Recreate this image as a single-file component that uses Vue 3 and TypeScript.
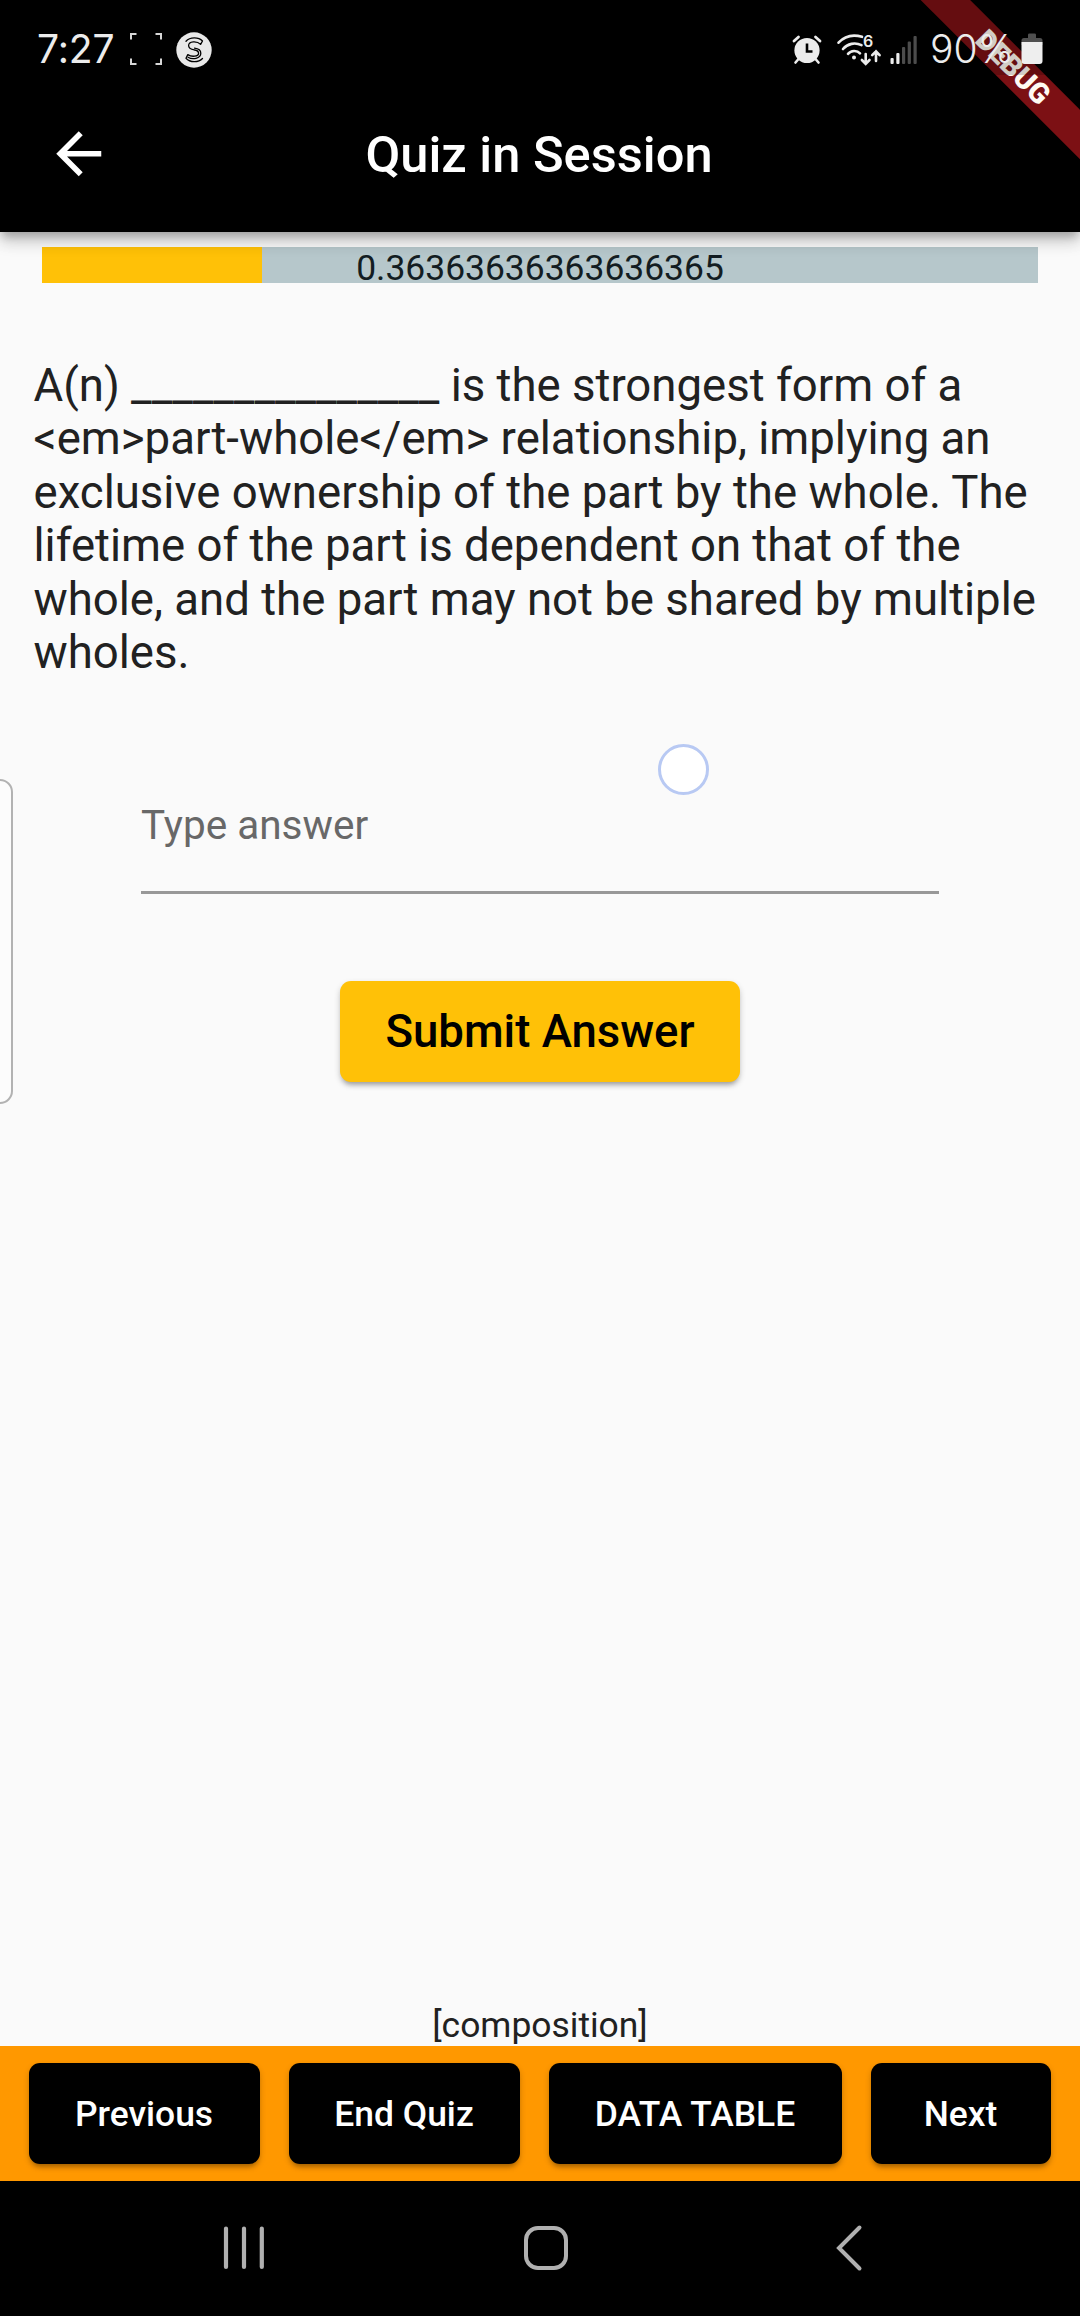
<script setup lang="ts">
interface QuizAction {
  label: string
  width: number
}

const progressLabel = '0.36363636363636365'
const progressPercent = 22.05
const question =
  'A(n) _______________ is the strongest form of a <em>part-whole</em> relationship, implying an exclusive ownership of the part by the whole. The lifetime of the part is dependent on that of the whole, and the part may not be shared by multiple wholes.'
const answerHint = '[composition]'

const actions: QuizAction[] = [
  { label: 'Previous', width: 231 },
  { label: 'End Quiz', width: 231 },
  { label: 'DATA TABLE', width: 293 },
  { label: 'Next', width: 180 },
]
</script>

<template>
  <div class="screen">
    <header class="top">
      <div class="status">
        <span class="clock">7:27</span>
        <svg class="capture" width="32" height="32" viewBox="0 0 32 32" fill="none" stroke="#d6d6d6" stroke-width="2">
          <path d="M1 6.5V1h5.5M25.500 1H31v5.500M31 25.500V31h-5.500M6.500 31H1v-5.500" />
        </svg>
        <svg class="badge" width="36" height="36" viewBox="0 0 36 36">
          <circle cx="18" cy="18" r="17.700" fill="#e8e8e8" />
          <g fill="none" stroke="#000" stroke-width="1.300" stroke-linecap="round" stroke-linejoin="round">
            <path d="M10 9.300C14 4.800 22.500 4.800 26.500 9L24.600 12.400C21 8.600 12.600 9 12.600 13.600C12.600 17.200 16 17.600 18.500 18C21 18.400 22.600 19.200 22.600 21.200C22.600 24.600 15.600 25.200 11.800 22.600L10 26.300C14 30.800 22.500 30.800 26.500 26.500" />
            <path d="M12 25.200C16.500 28 24.800 26.600 24.800 21.200C24.800 17.800 21.500 16.600 18.500 16.200" />
          </g>
        </svg>
        <span class="spacer"></span>
        <svg class="alarm" width="30" height="30" viewBox="0 0 30 30">
          <g stroke="#ececec" stroke-linecap="round" fill="none">
            <path d="M2 6L6.500 2M28 6L23.500 2" stroke-width="2.800" />
            <path d="M6.500 24L3.500 27.500M23.500 24L26.500 27.500" stroke-width="2.600" />
          </g>
          <circle cx="15" cy="15.500" r="12.600" fill="#ececec" />
          <path d="M15 8.500V16.500H20.500" fill="none" stroke="#000" stroke-width="2.600" />
        </svg>
        <svg class="wifi" width="44" height="38" viewBox="0 -4 44 38">
          <g fill="none" stroke="#ececec" stroke-linecap="round" stroke-width="2.600">
            <path d="M1.500 9.700C7.500 3.200 16 1.200 25 3.800" />
            <path d="M6 16C10.500 10.600 18 9 24.500 12.200" />
            <path d="M11 20.800C14 17.200 20 17 23 20.300" />
            <path d="M28.700 21V30.500M24.900 27L28.700 30.800L32.500 27M39 28V18.500M35.200 22.200L39 18.400L42.600 22.200" />
          </g>
          <circle cx="17" cy="24.400" r="2" fill="#ececec" />
          <text x="26" y="13.500" class="wifi-gen">6</text>
        </svg>
        <svg class="signal" width="28" height="30" viewBox="0 0 28 30">
          <g fill="#ececec">
            <rect x="0.500" y="23" width="3.200" height="6" rx="1" />
            <rect x="6.300" y="18" width="3.200" height="11" rx="1" />
          </g>
          <g fill="#4c4c4c">
            <rect x="12" y="12" width="3.200" height="17" rx="1" />
            <rect x="17.700" y="6.500" width="3.200" height="22.500" rx="1" />
            <rect x="23.500" y="1" width="3.200" height="28" rx="1" />
          </g>
        </svg>
        <span class="percent">90%</span>
        <svg class="battery" width="22" height="32" viewBox="0 0 22 32">
          <path d="M7 1.800Q7 0.500 8.500 0.500H13.500Q15 0.500 15 1.800V5H19Q21.500 5 21.500 7.500V12H0.500V7.500Q0.500 5 3 5H7Z" fill="#4f4f4f" />
          <path d="M0.500 9H21.500V28Q21.500 31 18.500 31H3.500Q0.500 31 0.500 28Z" fill="#eeeeee" />
        </svg>
      </div>
      <div class="app-bar">
        <svg class="back" width="67.500" height="67.500" viewBox="0 0 24 24" fill="#fff">
          <path d="M20 11H7.830l5.590-5.590L12 4l-8 8 8 8 1.410-1.410L7.830 13H20v-2z" />
        </svg>
        <h1 class="title">Quiz in Session</h1>
      </div>
      <div class="ribbon-clip">
        <div class="ribbon">DEBUG</div>
        <div class="scrim"></div>
      </div>
    </header>

    <main class="content">
      <div class="progress">
        <div class="progress-fill" :style="{ width: progressPercent + '%' }"></div>
        <span class="progress-label">{{ progressLabel }}</span>
      </div>
      <p class="question">{{ question }}</p>
      <div class="field">Type answer</div>
      <button class="submit" type="button">Submit Answer</button>
      <p class="hint">{{ answerHint }}</p>
      <div class="edge-panel"></div>
      <div class="touch"></div>
    </main>

    <footer class="actions">
      <button
        v-for="action in actions"
        :key="action.label"
        class="action"
        type="button"
        :style="{ width: action.width + 'px' }"
      >
        {{ action.label }}
      </button>
    </footer>

    <nav class="system-nav">
      <svg width="42" height="46" viewBox="0 0 42 46" fill="none" stroke="#b0b0b0" stroke-width="4.200" stroke-linecap="round">
        <path d="M3 3.500V42M21 3.500V42M38.800 3.500V42" />
      </svg>
      <svg class="home" width="46" height="46" viewBox="0 0 46 46" fill="none" stroke="#b0b0b0" stroke-width="4">
        <rect x="3" y="3" width="40" height="40" rx="12" />
      </svg>
      <svg class="nav-back" width="28" height="48" viewBox="0 0 28 48" fill="none" stroke="#b0b0b0" stroke-width="4" stroke-linecap="round">
        <path d="M24.500 3.500L4 24L24.500 44.500" />
      </svg>
    </nav>
  </div>
</template>

<style>
body {
  background: #fafafa;
}
</style>

<style scoped>
.screen {
  display: flex;
  flex-direction: column;
  width: 1080px;
  height: 2316px;
  overflow: hidden;
  background: #fafafa;
  color: #212121;
  font-family: Roboto, 'Liberation Sans', sans-serif;
}

.top {
  position: relative;
  z-index: 1;
  flex: none;
  height: 232px;
  background: #000;
  box-shadow: 0 6px 8px -2px rgba(0, 0, 0, 0.2), 0 11px 14px rgba(0, 0, 0, 0.14), 0 3px 20px rgba(0, 0, 0, 0.1);
}

.status {
  position: relative;
  z-index: 2;
  display: flex;
  align-items: flex-start;
  height: 98px;
  padding: 0 37px;
  box-sizing: border-box;
  color: #ececec;
  font-family: Inter, Roboto, sans-serif;
  font-size: 39px;
  line-height: 97px;
}

.status svg {
  flex: none;
}

.clock {
  width: 93px;
  letter-spacing: -0.1px;
}

.capture {
  margin-top: 33px;
}

.badge {
  margin: 31.500px 0 0 13.500px;
}

.spacer {
  flex: 1;
}

.alarm {
  margin-top: 35px;
}

.wifi {
  margin: 29px 0 0 15px;
  overflow: visible;
}

.wifi-gen {
  fill: #ececec;
  font-family: Inter, Roboto, sans-serif;
  font-size: 16px;
  font-weight: 600;
  line-height: 1;
}

.signal {
  margin: 34.500px 0 0 9px;
}

.percent {
  width: 91px;
  margin-left: 12px;
  font-weight: 300;
  letter-spacing: 0;
  white-space: nowrap;
}

.battery {
  margin-top: 33px;
}

.app-bar {
  display: grid;
  grid-template-columns: 112px 1fr 114px;
  align-items: center;
  height: 112px;
}

.back {
  justify-self: end;
}

.title {
  margin: 2px 0 0;
  color: #fff;
  font-size: 50.600px;
  font-weight: 500;
  line-height: 60px;
  text-align: center;
}

.ribbon-clip {
  position: absolute;
  top: 0;
  right: 0;
  z-index: 1;
  width: 232px;
  height: 232px;
  overflow: hidden;
}

.ribbon {
  position: absolute;
  top: 49.750px;
  left: 15px;
  width: 300px;
  height: 34.500px;
  transform: rotate(45deg);
  background: #7c1014;
  color: #fffaf2;
  font-size: 28.700px;
  font-weight: 900;
  line-height: 34.500px;
  text-align: center;
}

.scrim {
  position: absolute;
  inset: 0 0 auto;
  height: 75px;
  background: rgba(0, 0, 0, 0.18);
}

.content {
  position: relative;
  display: flex;
  flex: 1;
  flex-direction: column;
  align-items: center;
}

.progress {
  display: grid;
  grid-template-rows: 36.500px;
  flex: none;
  width: 996px;
  height: 36.500px;
  margin-top: 14.500px;
  background: #b6c7cb;
}

.progress-fill,
.progress-label {
  grid-area: 1 / 1;
}

.progress-fill {
  background: #ffc107;
}

.progress-label {
  color: #131d22;
  font-size: 35.440px;
  line-height: 42px;
  text-align: center;
}

.question {
  width: 1013px;
  margin: 76px 0 0;
  font-size: 45.560px;
  line-height: 53.400px;
}

.field {
  width: 798px;
  height: 90px;
  margin-top: 122px;
  border-bottom: 3px solid #989898;
  color: #686868;
  font-size: 40.500px;
  line-height: 48px;
}

.submit {
  width: 400px;
  height: 101px;
  margin-top: 86.500px;
  padding: 0;
  border: 0;
  border-radius: 11px;
  background: #ffc107;
  box-shadow: 0 5px 5px -3px rgba(0, 0, 0, 0.25), 0 3px 6px rgba(0, 0, 0, 0.2);
  color: #000;
  font: 500 45.560px/102px Roboto, sans-serif;
}

.hint {
  margin: auto 0 0;
  font-size: 35.440px;
  line-height: 42px;
}

.edge-panel {
  position: absolute;
  top: 547px;
  left: -30px;
  width: 39px;
  height: 321px;
  border: 2px solid #b2b2b2;
  border-radius: 13px;
  background: #fcfcfc;
}

.touch {
  position: absolute;
  top: 512px;
  left: 658px;
  width: 45px;
  height: 45px;
  border: 3px solid #b8c9f3;
  border-radius: 50%;
  background: #fff;
}

.actions {
  display: flex;
  flex: none;
  align-items: center;
  justify-content: space-evenly;
  height: 135px;
  background: #ff9800;
}

.action {
  flex: none;
  height: 101px;
  padding: 0 1px 0 0;
  border: 0;
  border-radius: 11px;
  background: #000;
  box-shadow: 0 5px 5px -3px rgba(0, 0, 0, 0.25), 0 3px 6px rgba(0, 0, 0, 0.2);
  color: #fff;
  font: 500 35.440px/103px Roboto, sans-serif;
}

.system-nav {
  display: flex;
  flex: none;
  align-items: center;
  height: 135px;
  padding: 0 0 1px 223px;
  box-sizing: border-box;
  background: #000;
}

.home {
  margin-left: 258px;
}

.nav-back {
  margin-left: 266px;
}
</style>
